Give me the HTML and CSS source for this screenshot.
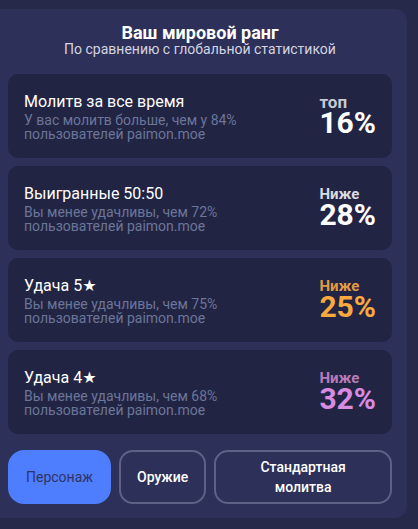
FILE: index.html
```html
<!DOCTYPE html>
<html lang="ru">
<head>
<meta charset="utf-8">
<link rel="stylesheet" href="styles.css">
</head>
<body>
<div class="panel">
  <div class="head">
    <div class="head-title">Ваш мировой ранг</div>
    <div class="head-sub">По сравнению с глобальной статистикой</div>
  </div>
  <div class="cards">
    <div class="card">
      <div class="info">
        <div class="info-title">Молитв за все время</div>
        <div class="info-sub">У вас молитв больше, чем у 84%<br>пользователей paimon.moe</div>
      </div>
      <div class="rank">
        <div class="rank-label rank-label-top gray">топ</div>
        <div class="rank-value white">16%</div>
      </div>
    </div>
    <div class="card">
      <div class="info">
        <div class="info-title">Выигранные 50:50</div>
        <div class="info-sub">Вы менее удачливы, чем 72%<br>пользователей paimon.moe</div>
      </div>
      <div class="rank">
        <div class="rank-label light">Ниже</div>
        <div class="rank-value white">28%</div>
      </div>
    </div>
    <div class="card">
      <div class="info">
        <div class="info-title">Удача 5★</div>
        <div class="info-sub">Вы менее удачливы, чем 75%<br>пользователей paimon.moe</div>
      </div>
      <div class="rank">
        <div class="rank-label orange-dim">Ниже</div>
        <div class="rank-value orange">25%</div>
      </div>
    </div>
    <div class="card">
      <div class="info">
        <div class="info-title">Удача 4★</div>
        <div class="info-sub">Вы менее удачливы, чем 68%<br>пользователей paimon.moe</div>
      </div>
      <div class="rank">
        <div class="rank-label pink-dim">Ниже</div>
        <div class="rank-value pink">32%</div>
      </div>
    </div>
  </div>
  <div class="tabs">
    <button class="tab tab-active">Персонаж</button>
    <button class="tab">Оружие</button>
    <button class="tab tab-wide">Стандартная<br>молитва</button>
  </div>
</div>
</body>
</html>
```
FILE: styles.css
```css
* { box-sizing: border-box; }
html, body { margin: 0; padding: 0; }
body {
  background: #262949;
  font-family: Roboto, "Noto Sans", "DejaVu Sans", sans-serif;
  color: #ffffff;
  width: 418px;
  height: 529px;
  overflow: hidden;
}
.panel {
  margin-top: 9px;
  width: 407px;
  height: 509px;
  background: #2d3058;
  border-radius: 0 12px 12px 0;
  padding: 15px 15px 15px 8px;
}
.head { text-align: center; }
.head-title {
  font-size: 18px;
  font-weight: 700;
  line-height: 18px;
}
.head-sub {
  font-size: 14px;
  line-height: 14px;
  color: #d3d4e1;
}
.cards {
  margin-top: 18px;
  display: flex;
  flex-direction: column;
  gap: 8px;
}
.card {
  height: 84px;
  background: #222444;
  border-radius: 10px;
  padding: 0 16px;
  display: flex;
  align-items: center;
  justify-content: space-between;
}
.info-title {
  font-size: 16px;
  line-height: 20px;
  margin-bottom: 1px;
}
.info-sub {
  font-size: 14px;
  line-height: 14px;
  color: #6b7698;
}
.rank { font-weight: 700; }
.rank-label {
  font-size: 15px;
  line-height: 12px;
}
.rank-label-top {
  font-size: 17px;
}
.rank-value {
  font-size: 30px;
  line-height: 26px;
  padding-top: 2px;
}
.gray { color: #c9c9d3; }
.light { color: #dadae2; }
.white { color: #ffffff; }
.orange-dim { color: #e09a45; }
.orange { color: #f9a93d; }
.pink-dim { color: #b77bb9; }
.pink { color: #d98be0; }
.tabs {
  margin-top: 16px;
  display: flex;
  gap: 8px;
}
.tab {
  font-family: Roboto, "Noto Sans", sans-serif;
  font-size: 14px;
  line-height: 20px;
  font-weight: 500;
  color: #ffffff;
  background: transparent;
  border: 2px solid #5e6186;
  border-radius: 14px;
  padding: 5px 16px;
}
.tab-active {
  background: #4e7dfe;
  border-color: #4e7dfe;
  color: #2f3566;
  font-weight: 400;
  border-radius: 16px;
}
.tab-wide { flex: 1; }
```
